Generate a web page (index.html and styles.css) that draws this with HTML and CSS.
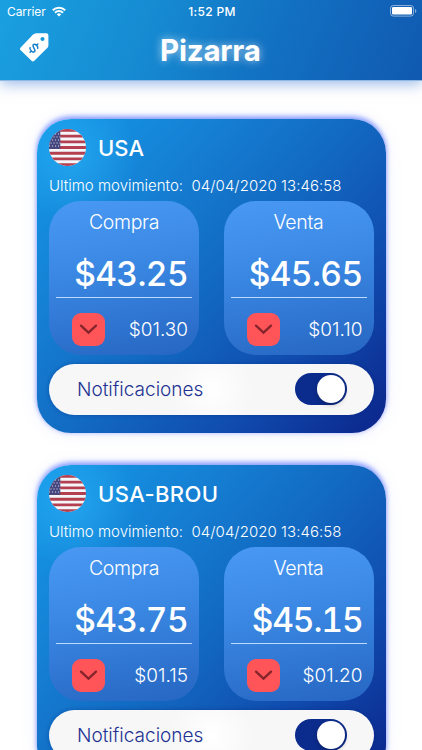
FILE: index.html
```html
<!DOCTYPE html>
<html lang="es">
<head>
<meta charset="utf-8">
<title>Pizarra</title>
<link rel="stylesheet" href="styles.css">
</head>
<body>
<svg class="defs" width="0" height="0" aria-hidden="true">
  <symbol id="flag" viewBox="0 0 37 37">
    <clipPath id="round"><circle cx="18.5" cy="18.5" r="18.5"/></clipPath>
    <g clip-path="url(#round)">
      <rect width="37" height="37" fill="#f5f6fa"/>
      <path d="M0 1.4h37M0 7.1h37M0 12.8h37M0 18.5h37M0 24.2h37M0 29.9h37M0 35.6h37" stroke="#b4404f" stroke-width="2.85"/>
      <rect width="11.3" height="19.9" fill="#46467f"/>
      <path d="M1.5 8h10M0 11h11M1.5 14h10M0 17h11M6 5h5" stroke="#d8d9ec" stroke-width="1.1" stroke-dasharray="1.1 1.9"/>
    </g>
  </symbol>
  <symbol id="down" viewBox="0 0 33 33">
    <rect width="33" height="33" rx="9" fill="#ff5558"/>
    <path d="M9 12.6l7.5 7 7.5-7" fill="none" stroke="#84242c" stroke-width="2.3" stroke-linecap="round" stroke-linejoin="miter"/>
  </symbol>
</svg>
<header class="header">
  <div class="status">
    <div class="carrier"><span>Carrier</span>
      <svg width="14" height="11" viewBox="0 0 14 11"><g fill="none" stroke="#fff" stroke-width="2"><path d="M.8 4.2a8.8 8.8 0 0 1 12.4 0"/><path d="M3 6.7a5.7 5.7 0 0 1 8 0"/></g><path d="M4.8 8.4a3.2 3.2 0 0 1 4.4 0L7 10.6z" fill="#fff"/></svg>
    </div>
    <span class="time">1:52 PM</span>
    <svg class="battery" width="27" height="12" viewBox="0 0 27 12"><rect x=".5" y=".5" width="23" height="10.6" rx="2.8" fill="none" stroke="#fff" stroke-opacity=".5"/><rect x="2" y="2" width="20" height="7.6" rx="1.3" fill="#fff"/><path d="M25 4v4q1.4-.6 1.4-2T25 4z" fill="#fff" opacity=".5"/></svg>
  </div>
  <div class="nav">
    <svg class="tag" width="29" height="29" viewBox="0 0 29 29">
      <path fill="#fff" fill-rule="evenodd" d="M12.8 1.8Q14.300.3 16.200.3H26.400q2 0 2 2V12.500q0 1.500-1.200 2.600L14.300 27.700q-1.400 1.400-2.800 0L.7 17.300q-1.400-1.400 0-2.800zM22.500 3.900a2 2 0 1 0 .01 0z"/>
      <g transform="translate(13.900 15.100) rotate(43)" fill="none" stroke="#167fc9" stroke-width="1.500" stroke-linecap="round"><path d="M2.900-2.500C2.200-4.300-2.700-4.400-2.700-2S2.900-.5 2.900 2-2.500 4.400-3.100 2.300M0-5.700v1.500M0 4v1.600"/></g>
    </svg>
    <h1 class="title">Pizarra</h1>
  </div>
</header>
<main class="list">
  <section class="card">
    <div class="card-head"><svg class="flag"><use href="#flag"/></svg><h2 class="name">USA</h2></div>
    <div class="moved"><span class="moved-label">Ultimo movimiento:</span><span class="moved-date">04/04/2020 13:46:58</span></div>
    <div class="panels">
      <div class="panel"><div class="label">Compra</div><div class="price">$43.25</div><div class="change"><svg class="down"><use href="#down"/></svg><span class="delta">$01.30</span></div></div>
      <div class="panel"><div class="label">Venta</div><div class="price">$45.65</div><div class="change"><svg class="down"><use href="#down"/></svg><span class="delta">$01.10</span></div></div>
    </div>
    <div class="notify"><span class="notify-label">Notificaciones</span><span class="switch"><i class="knob"></i></span></div>
  </section>
  <section class="card">
    <div class="card-head"><svg class="flag"><use href="#flag"/></svg><h2 class="name long">USA-BROU</h2></div>
    <div class="moved"><span class="moved-label">Ultimo movimiento:</span><span class="moved-date">04/04/2020 13:46:58</span></div>
    <div class="panels">
      <div class="panel"><div class="label">Compra</div><div class="price">$43.75</div><div class="change"><svg class="down"><use href="#down"/></svg><span class="delta">$01.15</span></div></div>
      <div class="panel"><div class="label">Venta</div><div class="price narrow">$45.15</div><div class="change"><svg class="down"><use href="#down"/></svg><span class="delta">$01.20</span></div></div>
    </div>
    <div class="notify"><span class="notify-label">Notificaciones</span><span class="switch"><i class="knob"></i></span></div>
  </section>
</main>
</body>
</html>
```
FILE: styles.css
```css
* { box-sizing: border-box; }
html, body { height: 750px; overflow: hidden; }
body { margin: 0; background: #fff; color: #fff; font-family: Inter, "Liberation Sans", sans-serif; display: flex; flex-direction: column; }
h1, h2 { margin: 0; }
svg { display: block; flex: none; }
.defs { position: absolute; }
.header { flex: none; height: 81px; background: linear-gradient(112deg, #1aa0e1 0%, #168bd2 35%, #1272c3 62%, #1059b1 100%); box-shadow: 0 2px 14px rgba(30, 100, 205, .5); border-bottom: 1px solid #8fb8e2; }
.status { height: 22px; padding: 0 5px 0 7px; display: grid; grid-template-columns: 1fr auto 1fr; align-items: center; }
.carrier { display: flex; gap: 6px; align-items: center; font-size: 12px; letter-spacing: -.1px; }
.time { font-size: 12px; font-weight: 500; letter-spacing: .35px; }
.battery { justify-self: end; }
.nav { height: 56px; padding-left: 20px; display: grid; grid-template-columns: 140px 1fr; align-items: center; }
.tag { margin-top: -5px; }
.title { font-size: 29.500px; line-height: 36px; font-weight: 750; letter-spacing: -.2px; margin-top: -1px; text-shadow: 0 0 9px rgba(255, 255, 255, .65); white-space: nowrap; }
.list { padding: 38px 36.500px 0 37px; display: flex; flex-direction: column; gap: 32px; }
.card { flex: none; height: 314px; padding: 10px 12px 0; border-radius: 34px; background: radial-gradient(circle at 34px 38px, rgba(41, 174, 245, .65), rgba(41, 174, 245, 0) 65px), linear-gradient(132deg, #149ae8 0%, #1581d5 27%, #1269c1 51%, #104bad 75%, #0c2a90 96%); box-shadow: 0 0 5px rgba(70, 95, 255, .32), 0 -3px 5px rgba(65, 100, 255, .5), 0 0 18px rgba(100, 120, 255, .1); }
.card-head { height: 37px; display: flex; align-items: center; gap: 12px; }
.flag { width: 37px; height: 37px; }
.name { font-size: 22px; line-height: 37px; font-weight: 500; padding-top: 1px; }
.long { letter-spacing: .4px; }
.moved { margin-top: 10px; height: 20px; display: flex; line-height: 20px; font-size: 15px; font-weight: 300; white-space: nowrap; }
.moved-label { width: 142.500px; }
.moved-date { letter-spacing: .05px; }
.panels { margin-top: 5px; display: flex; justify-content: space-between; }
.panel { width: 150px; height: 154px; border-radius: 32px; padding: 8px 7px 0; background: linear-gradient(170deg, #4999f4 0%, #3a88e3 42%, #2666c2 100%); }
.label { height: 26px; line-height: 26px; font-size: 19.500px; font-weight: 300; letter-spacing: -.35px; text-align: center; }
.price { height: 63px; line-height: 79px; font-size: 33.500px; font-weight: 500; font-variant-numeric: tabular-nums; letter-spacing: -.6px; text-align: right; padding-right: 4px; border-bottom: 1px solid #bcdcff; }
.narrow { letter-spacing: -1.100px; }
.change { height: 63px; padding: 0 4px 0 16px; display: flex; justify-content: space-between; align-items: center; }
.down { width: 33px; height: 33px; }
.delta { font-size: 19px; font-weight: 300; }
.notify { margin-top: 8.500px; height: 51px; border-radius: 26px; padding: 0 27px 0 28px; display: flex; align-items: center; justify-content: space-between; background: radial-gradient(circle at 50% 50%, #fff 0, #f7f7f7 42px); color: #223293; box-shadow: 0 0 4px rgba(0, 35, 120, .4); }
.notify-label { font-size: 19px; font-weight: 300; padding-top: 1px; }
.switch { width: 52px; height: 32px; border-radius: 16px; padding: 2px; background: #0c2c8d; display: flex; justify-content: flex-end; }
.knob { width: 28px; height: 28px; border-radius: 50%; background: #fff; box-shadow: 0 2px 4px rgba(0, 0, 0, .25); }
```
